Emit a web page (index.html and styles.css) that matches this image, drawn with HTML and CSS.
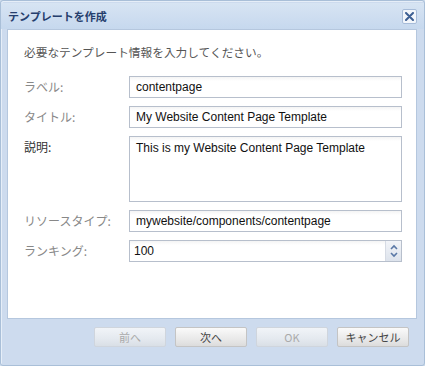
FILE: index.html
```html
<!DOCTYPE html>
<html lang="ja">
<head>
    <meta charset="UTF-8">
    <title>テンプレートを作成</title>
    <link rel="stylesheet" href="styles.css">
</head>
<body>
    <div class="window">
        <div class="titlebar">
            <span class="title">テンプレートを作成</span>
            <span class="close">
                <svg width="9" height="9" viewBox="0 0 9 9"><path d="M1 1 L8 8 M8 1 L1 8" stroke="#3d5f93" stroke-width="2" stroke-linecap="round"/></svg>
            </span>
        </div>

        <div class="panel">
            <p class="intro">必要なテンプレート情報を入力してください。</p>

            <div class="form">
                <label>ラベル:</label>
                <div class="field">contentpage</div>

                <label>タイトル:</label>
                <div class="field">My Website Content Page Template</div>

                <label class="dark">説明:</label>
                <div class="field area">This is my Website Content Page Template</div>

                <label>リソースタイプ:</label>
                <div class="field">mywebsite/components/contentpage</div>

                <label>ランキング:</label>
                <div class="field spin">
                    <span>100</span>
                    <span class="arrows">
                        <svg width="10" height="7" viewBox="0 0 10 7"><path d="M2 5 L5 2 L8 5" fill="none" stroke="#5a78a6" stroke-width="1.6"/></svg>
                        <svg width="10" height="7" viewBox="0 0 10 7"><path d="M2 2 L5 5 L8 2" fill="none" stroke="#5a78a6" stroke-width="1.6"/></svg>
                    </span>
                </div>
            </div>
        </div>

        <!-- botones -->
        <div class="buttons">
            <button class="btn disabled">前へ</button>
            <button class="btn">次へ</button>
            <button class="btn disabled">OK</button>
            <button class="btn">キャンセル</button>
        </div>
    </div>
</body>
</html>
```

FILE: styles.css
```css
body {
    margin: 0;
    padding: 0;
    font-family: "Liberation Sans", "Noto Sans CJK JP", sans-serif;
    background: #cfdcec;
}
.window {
    box-sizing: border-box;
    width: 425px;
    height: 366px;
    border: 1px solid #a9bfd8;
    border-radius: 3px;
    background: #cddbee;
    padding: 2px 7px 0 6px;
    box-shadow: inset 1px 1px 0 #e6eef8;
}
.titlebar {
    display: flex;
    align-items: center;
    justify-content: space-between;
    height: 26px;
    background: linear-gradient(#d7e4f3, #c6d8ee);
    margin: 0 -7px 0 -6px;
    padding: 0 7px 0 7px;
}
.title {
    font-family: "Noto Sans CJK JP", sans-serif;
    font-size: 11px;
    font-weight: bold;
    color: #253e6d;
}
.close {
    display: flex;
    align-items: center;
    justify-content: center;
    width: 13px;
    height: 13px;
    border: 1px solid #a7bcd9;
    border-radius: 2px;
    background: #f2f6fb;
}
.panel {
    box-sizing: border-box;
    height: 290px;
    background: #fff;
    border: 1px solid #b5c7de;
    padding: 14px 15px 0 16px;
}
.intro {
    margin: 0 0 16px 0;
    font-family: "Noto Sans CJK JP", sans-serif;
    font-size: 11.7px;
    line-height: 16px;
    color: #555;
}
.form {
    display: grid;
    grid-template-columns: 105px 273px;
    row-gap: 8px;
}
.form label {
    font-family: "Noto Sans CJK JP", sans-serif;
    font-size: 12px;
    color: #888;
    padding-top: 3px;
    line-height: 16px;
}
.form label.dark {
    color: #333;
}
.field {
    box-sizing: border-box;
    height: 22px;
    border: 1px solid #b7bfcc;
    background: linear-gradient(#f4f4f4, #fff 4px);
    padding: 0 6px;
    font-size: 12px;
    line-height: 20px;
    color: #111;
    white-space: nowrap;
}
.field.area {
    height: 66px;
    line-height: 18px;
    padding-top: 2px;
}
.field.spin {
    display: flex;
    justify-content: space-between;
    padding-left: 4px;
    padding-right: 0;
}
.arrows {
    display: flex;
    flex-direction: column;
    justify-content: center;
    width: 15px;
    background: linear-gradient(#f2f4f8, #dde3ec);
    border-left: 1px solid #d6dbe4;
}
.arrows svg {
    display: block;
    margin: 0 auto;
}
.buttons {
    display: flex;
    justify-content: flex-end;
    gap: 9px;
    padding: 8px 8px 0 0;
}
.btn {
    width: 72px;
    height: 20px;
    border: 1px solid #c4c4c4;
    border-radius: 2px;
    background: linear-gradient(#fafafa, #e9e9e9 60%, #dcdcdc);
    font-family: "Noto Sans CJK JP", sans-serif;
    font-size: 11px;
    color: #444;
    padding: 0;
}
.btn.disabled {
    color: #aaa;
    background: linear-gradient(#f1f4f8, #e4e9ef 60%, #d9dfe6);
    border-color: #cfd5dd;
}
```
